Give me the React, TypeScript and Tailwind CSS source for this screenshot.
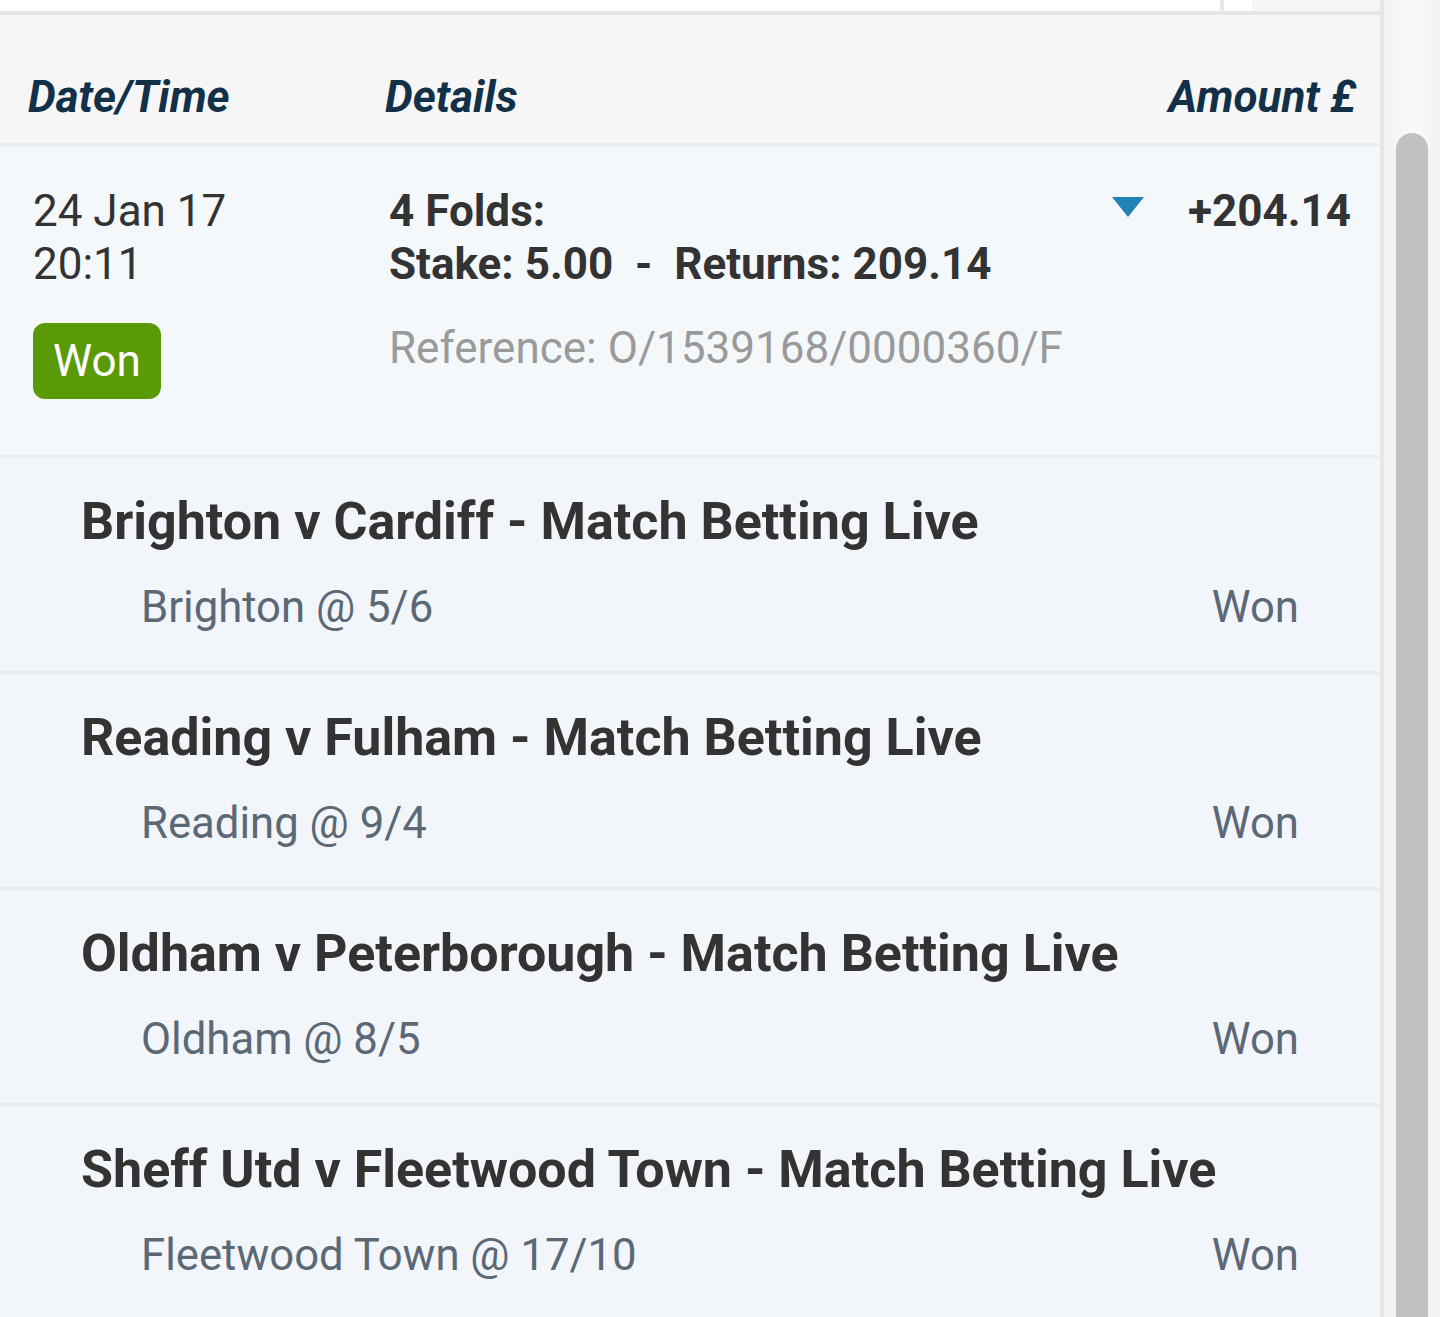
// Bet history detail: one accumulator row expanded into its legs
const legs = [
  { event: "Brighton v Cardiff - Match Betting Live", pick: "Brighton @ 5/6" },
  { event: "Reading v Fulham - Match Betting Live", pick: "Reading @ 9/4" },
  { event: "Oldham v Peterborough - Match Betting Live", pick: "Oldham @ 8/5" },
  { event: "Sheff Utd v Fleetwood Town - Match Betting Live", pick: "Fleetwood Town @ 17/10" },
];

function LegRow({ event, pick }: { event: string; pick: string }) {
  return (
    <div className="h-[216px] shrink-0 border-b-[3px] border-[#e8ebef] bg-[#f2f5fa] pl-[81px] pr-[81px] pt-[38px]">
      <div className="text-[52px] font-bold leading-none text-[#333333]">{event}</div>
      <div className="mt-[38px] flex justify-between pl-[60px] text-[43.7px] leading-none text-[#5b6876]">
        <span>{pick}</span>
        <span>Won</span>
      </div>
    </div>
  );
}

export default function App() {
  return (
    <div className="flex h-[1317px] w-[1440px] overflow-hidden bg-white font-['Roboto',sans-serif]">
      <div className="flex w-[1380px] shrink-0 flex-col">
        {/* strip of the tab bar above */}
        <div className="flex h-[15px] shrink-0 border-b-4 border-[#e6e6e6]">
          <div className="w-[1220px] bg-white" />
          <div className="w-[4px] bg-[#e6e6e6]" />
          <div className="w-[28px] bg-white" />
          <div className="flex-1 bg-[#f4f5f7]" />
        </div>

        {/* column headers */}
        <div className="flex h-[131px] shrink-0 border-b-[3px] border-[#ececec] bg-[#f6f6f6] pl-[28px] pr-[24px] pt-[60px] text-[44px] font-bold italic leading-none text-[#133049]">
          <div className="w-[357px]">Date/Time</div>
          <div className="flex-1">Details</div>
          <div>Amount £</div>
        </div>

        {/* bet summary */}
        <div className="flex h-[312px] shrink-0 border-b-[3px] border-[#ebedf0] bg-[#f5f8fb] pl-[33px] pr-[29px] pt-[39px] text-[44px] leading-[53px] text-[#333333]">
          <div className="w-[356px]">
            <div>24 Jan 17</div>
            <div>20:11</div>
            <div className="mt-[32px] flex h-[76px] w-[128px] items-center justify-center rounded-[12px] bg-[#5a9a08] text-[44px] leading-none text-white">
              Won
            </div>
          </div>
          <div className="flex-1 font-bold">
            <div>4 Folds:</div>
            <div className="whitespace-pre">Stake: 5.00  -  Returns: 209.14</div>
            <div className="mt-[35px] text-[44px] font-normal leading-none text-[#9a9a9a]">
              Reference: O/1539168/0000360/F
            </div>
          </div>
          <div className="mr-[44px] pt-[12px]">
            <svg width="32" height="20" viewBox="0 0 32 20">
              <polygon points="0,0 32,0 16,20" fill="#2281b7" />
            </svg>
          </div>
          <div className="font-bold">+204.14</div>
        </div>

        {legs.map((l) => (
          <LegRow key={l.event} event={l.event} pick={l.pick} />
        ))}
      </div>

      {/* scrollbar */}
      <div className="flex w-[60px] shrink-0 border-l-4 border-[#e6e6e6] bg-gradient-to-r from-[#f1f1f1] via-[#fafafa] to-[#f3f3f3] pl-[12px] pr-[12px] pt-[133px]">
        <div className="w-[32px] rounded-t-[16px] bg-[#c1c1c1]" />
      </div>
    </div>
  );
}
